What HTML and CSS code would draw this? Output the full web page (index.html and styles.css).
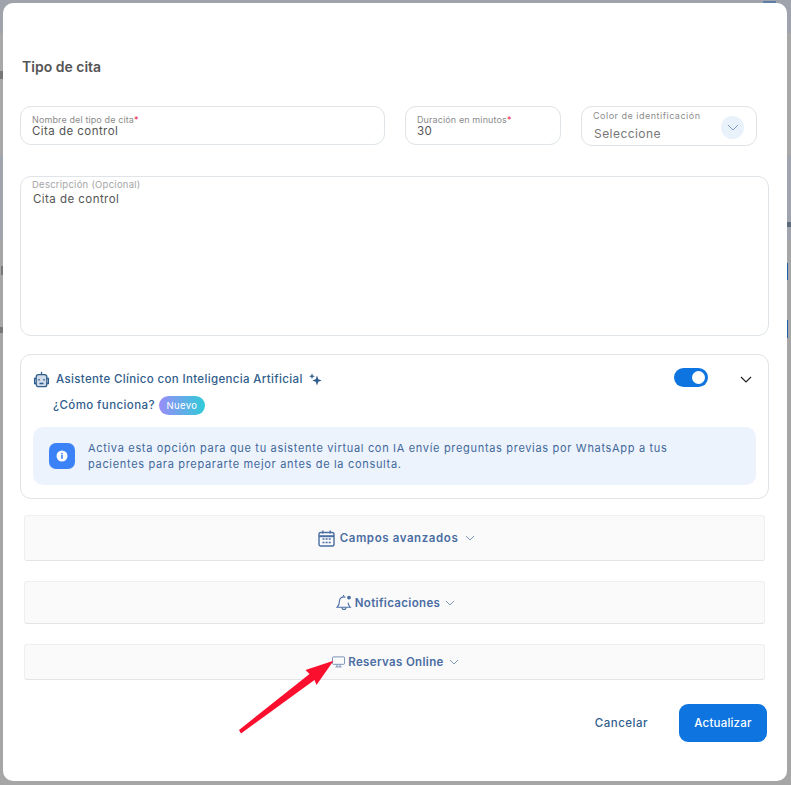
FILE: index.html

```html
<!DOCTYPE html>
<html lang="es">
<head>
    <meta charset="UTF-8">
    <meta name="viewport" content="width=device-width, initial-scale=1.0">
    <title>Tipo de cita</title>
    <link rel="stylesheet" href="styles.css">
</head>
<body>

    <!-- Bits of the page behind the modal -->
    <span class="behind behind-top"></span>
    <span class="behind behind-left-1"></span>
    <span class="behind behind-left-2"></span>
    <span class="behind behind-left-3"></span>
    <span class="behind behind-right-1"></span>
    <span class="behind behind-right-2"></span>
    <span class="behind behind-right-3"></span>

    <div class="modal">
        <h1 class="modal-title">Tipo de cita</h1>

        <!-- Top fields -->
        <div class="field-row">
            <div class="field field-name">
                <label>Nombre del tipo de cita<span class="required">*</span></label>
                <div class="value">Cita de control</div>
            </div>
            <div class="field field-minutes">
                <label>Duración en minutos<span class="required">*</span></label>
                <div class="value">30</div>
            </div>
            <div class="field field-color">
                <div>
                    <label>Color de identificación</label>
                    <div class="value">Seleccione</div>
                </div>
                <span class="select-arrow">
                    <svg width="12" height="7" viewBox="0 0 12 7" fill="none" stroke="#7f9cc0" stroke-width="1"><path d="M1 1l5 5 5-5"/></svg>
                </span>
            </div>
        </div>

        <div class="field-description">
            <label>Descripción (Opcional)</label>
            <div class="value">Cita de control</div>
        </div>

        <!-- AI assistant card -->
        <div class="ai-card">
            <div class="ai-header">
                <svg class="robot" width="17" height="17" viewBox="0 0 17 17" fill="none" stroke="#2f5d8c" stroke-width="1.3">
                    <path d="M8.5 .8v2.4"/>
                    <rect x="3.2" y="3.6" width="10.6" height="12" rx="2.2" fill="#cfdbe8"/>
                    <path d="M3.2 7.5H1.6v5h1.6M13.8 7.5h1.6v5h-1.6"/>
                    <path d="M6 8v1.6M11 8v1.6M6.5 12.5h4" stroke-width="1.4"/>
                </svg>
                <span class="ai-title">Asistente Clínico con Inteligencia Artificial</span>
                <svg class="sparkle" width="13" height="13" viewBox="0 0 13 13" fill="#2f5d8c">
                    <path d="M8 2.6l1.3 3.6 3.5 1.3-3.5 1.3L8 12.6 6.7 8.8 3.2 7.5l3.5-1.3z"/>
                    <path d="M3 .2l.8 2.2 2.2.8-2.2.8L3 6.2l-.8-2.2L0 3.2l2.2-.8z"/>
                </svg>
                <span class="toggle"><span class="toggle-knob"></span></span>
                <svg class="ai-chevron" width="12" height="7" viewBox="0 0 12 7" fill="none" stroke="#222" stroke-width="1.2"><path d="M1 1l5 5 5-5"/></svg>
            </div>
            <div class="ai-help">
                <span>¿Cómo funciona?</span>
                <span class="badge">Nuevo</span>
            </div>
            <div class="info-box">
                <span class="info-icon">
                    <svg width="12" height="12" viewBox="0 0 12 12"><circle cx="6" cy="6" r="5.5" fill="#fff"/><rect x="5.2" y="5" width="1.6" height="3.8" fill="#3b82f6"/><rect x="5.2" y="2.9" width="1.6" height="1.5" fill="#3b82f6"/></svg>
                </span>
                <p>Activa esta opción para que tu asistente virtual con IA envíe preguntas previas por WhatsApp a tus pacientes para prepararte mejor antes de la consulta.</p>
            </div>
        </div>

        <!-- Accordions -->
        <div class="accordion accordion-fields">
            <svg width="17" height="17" viewBox="0 0 17 17" fill="none" stroke="#4a6da3" stroke-width="1.4">
                <rect x="1" y="2.5" width="15" height="13.5" rx="1.8"/>
                <path d="M1 6.2h15" stroke-width="2"/>
                <path d="M4.8 .6v3M12.2 .6v3"/>
                <path d="M4.5 9h2M7.6 9h2M10.7 9h2M4.5 12.4h2M7.6 12.4h2M10.7 12.4h2" stroke-width="1.5"/>
            </svg>
            <span>Campos avanzados</span>
            <svg class="chev" width="10" height="6" viewBox="0 0 10 6" fill="none" stroke="#8299bd" stroke-width="1"><path d="M1 1l4 4 4-4"/></svg>
        </div>
        <div class="accordion accordion-notify">
            <svg width="16" height="17" viewBox="0 0 16 17" fill="none" stroke="#4a6da3" stroke-width="1.1">
                <path d="M9.5 3.2A4.4 4.4 0 0 0 3.4 7.2c0 3.5-.8 4.6-2.2 6h13c-1.3-1.3-1.9-2.3-2.1-4.6"/>
                <path d="M6 13.5a2 2 0 0 0 4 0"/>
                <path d="M7.6 1v1.4"/>
                <circle cx="13" cy="3.6" r="1.9" fill="#4a6da3" stroke="none"/>
            </svg>
            <span>Notificaciones</span>
            <svg class="chev" width="10" height="6" viewBox="0 0 10 6" fill="none" stroke="#8299bd" stroke-width="1"><path d="M1 1l4 4 4-4"/></svg>
        </div>
        <div class="accordion accordion-online">
            <svg width="13" height="12" viewBox="0 0 14 12" fill="none" stroke="#7189b3" stroke-width="1">
                <rect x=".5" y=".5" width="13" height="8" rx="1"/>
                <path d="M5.6 8.8l-.5 2.3M8.4 8.8l.5 2.3M3.8 11.3h6.4"/>
            </svg>
            <span>Reservas Online</span>
            <svg class="chev" width="10" height="6" viewBox="0 0 10 6" fill="none" stroke="#8299bd" stroke-width="1"><path d="M1 1l4 4 4-4"/></svg>
        </div>

        <div class="modal-actions">
            <button class="btn-cancel">Cancelar</button>
            <button class="btn-save">Actualizar</button>
        </div>
    </div>

    <!-- Annotation arrow on top of the screenshot -->
    <svg class="annotation" width="791" height="785" viewBox="0 0 791 785">
        <polygon fill="#fb0f2f" points="333.5,660.7 305.5,670 309.5,674 239,730 241,733.5 314.5,680 316.5,685"/>
    </svg>

</body>
</html>
```

FILE: styles.css

```css
* {
    box-sizing: border-box;
}
html, body {
    height: 100%;
}
body {
    margin: 0;
    padding: 3px 4px 4px 3px;
    overflow: hidden;
    background: linear-gradient(#9fa3ab 0 33px, #a8a8a8 33px 155px, #a0a4ac 155px 240px, #a6a6a6 240px);
    font-family: Inter, "Open Sans", sans-serif;
}
.behind {
    position: absolute;
}
.behind-top {
    top: 1px;
    left: 763px;
    width: 13px;
    height: 2px;
    background-color: #5f7fa5;
}
.behind-left-1 {
    top: 71px;
    left: 0;
    width: 3px;
    height: 8px;
    background-color: #777;
}
.behind-left-2 {
    top: 266px;
    left: 1px;
    width: 2px;
    height: 9px;
    background-color: #777;
}
.behind-left-3 {
    top: 327px;
    left: 0;
    width: 3px;
    height: 6px;
    background-color: #777;
}
.behind-right-1 {
    top: 222px;
    left: 787px;
    width: 4px;
    height: 5px;
    background-color: #5c6a7c;
}
.behind-right-2 {
    top: 263px;
    left: 787px;
    width: 1px;
    height: 17px;
    background-color: #1f5fb0;
}
.behind-right-3 {
    top: 320px;
    left: 787px;
    width: 1px;
    height: 18px;
    background-color: #1f5fb0;
}
.modal {
    position: relative;
    height: 778px;
    padding: 54px 18px 0 17px;
    background-color: #fff;
    border-radius: 10px;
}
.modal-title {
    margin: 0 0 29px 2px;
    font-size: 14px;
    line-height: 20px;
    font-weight: 600;
    color: #555;
}
label {
    display: block;
    font-size: 9px;
    line-height: 11px;
    letter-spacing: 0.12px;
    color: #8c8c8c;
}
.required {
    color: #e8173f;
}
.value {
    font-size: 11.5px;
    line-height: 13px;
    letter-spacing: 0.45px;
    color: #555;
}
.field-row {
    display: flex;
    align-items: flex-start;
    gap: 20px;
}
.field {
    height: 39px;
    padding: 7px 11px 0;
    border: 1px solid #dfe4e8;
    border-radius: 11px;
}
.field-name {
    width: 365px;
}
.field-minutes {
    width: 156px;
}
.field-color {
    display: flex;
    justify-content: space-between;
    width: 176px;
    height: 40px;
    padding: 3px 12px 0 11px;
}
.field-color label {
    letter-spacing: 0.5px;
}
.field-color .value {
    margin-top: 6px;
    margin-left: 1px;
    font-size: 12px;
    color: #777;
}
.select-arrow {
    display: flex;
    align-items: center;
    justify-content: center;
    width: 23px;
    height: 23px;
    margin-top: 6px;
    border-radius: 50%;
    background-color: #e9f1fb;
}
.field-description {
    width: 749px;
    height: 160px;
    margin-top: 30px;
    padding: 2px 11px;
    border: 1px solid #dfe4e8;
    border-radius: 11px;
}
.field-description label {
    color: #a5a5a5;
    font-size: 9.5px;
    letter-spacing: 0.25px;
}
.field-description .value {
    margin-top: 3px;
    margin-left: 1px;
}
.ai-card {
    width: 749px;
    height: 145px;
    margin-top: 18px;
    padding: 0 12px;
    border: 1px solid #dfe4e8;
    border-radius: 11px;
}
.ai-header {
    display: flex;
    align-items: center;
    height: 40px;
    padding-top: 8px;
    font-size: 11.5px;
    color: #2f5d8c;
}
.ai-title {
    margin-left: 6px;
    letter-spacing: 0.35px;
    font-weight: 500;
}
.sparkle {
    margin-left: 6px;
}
.toggle {
    display: flex;
    align-items: center;
    justify-content: flex-end;
    width: 34px;
    height: 19px;
    margin-left: auto;
    margin-top: -4px;
    margin-right: 1px;
    padding-right: 3px;
    border-radius: 10px;
    background-color: #0e74e0;
}
.toggle-knob {
    width: 13px;
    height: 13px;
    border-radius: 50%;
    background-color: #fff;
}
.ai-chevron {
    margin-left: 31px;
    margin-right: 4px;
}
.ai-help {
    display: flex;
    align-items: center;
    gap: 4px;
    height: 20px;
    margin-left: 20px;
    font-size: 11.5px;
    letter-spacing: 0.4px;
    font-weight: 500;
    color: #2f5d8c;
}
.badge {
    width: 46px;
    height: 19px;
    border-radius: 10px;
    background: linear-gradient(90deg, #9a8cf8, #2fcbd8);
    color: #fff;
    font-size: 9.5px;
    line-height: 19px;
    font-weight: 400;
    text-align: center;
}
.info-box {
    display: flex;
    align-items: center;
    gap: 13px;
    height: 58px;
    margin-top: 12px;
    padding: 0 16px;
    border-radius: 10px;
    background-color: #edf3fd;
}
.info-box p {
    width: 600px;
    margin: 0;
    font-size: 11px;
    line-height: 16px;
    letter-spacing: 0.68px;
    color: #41689a;
}
.info-icon {
    display: flex;
    align-items: center;
    justify-content: center;
    flex-shrink: 0;
    width: 26px;
    height: 26px;
    border-radius: 7px;
    background-color: #3b82f6;
}
.accordion {
    display: flex;
    align-items: center;
    justify-content: center;
    gap: 3px;
    width: 741px;
    margin-left: 4px;
    padding-left: 2px;
    border: 1px solid #eeeff1;
    border-bottom: 1px solid #e2e4e7;
    border-radius: 3px;
    background-color: #fafafa;
    font-size: 11.5px;
    font-weight: 600;
    letter-spacing: 0.35px;
    color: #4a6da3;
}
.accordion .chev {
    margin-left: 2px;
}
.accordion-fields {
    gap: 5px;
    height: 46px;
    margin-top: 16px;
    padding-left: 4px;
    letter-spacing: 0.6px;
}
.accordion-notify {
    height: 43px;
    margin-top: 20px;
}
.accordion-online {
    height: 36px;
    margin-top: 20px;
}
.modal-actions {
    display: flex;
    align-items: center;
    justify-content: flex-end;
    margin-top: 24px;
    margin-right: 2px;
}
.modal-actions button {
    border: none;
    font-family: inherit;
    font-size: 11.5px;
    font-weight: 500;
    letter-spacing: 0.2px;
}
.modal-actions .btn-cancel {
    margin-right: 31px;
    padding: 0;
    background: none;
    color: #2f5d8c;
    letter-spacing: 0.5px;
}
.btn-save {
    width: 88px;
    height: 38px;
    border-radius: 9px;
    background-color: #0e74e0;
    color: #fff;
}
.annotation {
    position: absolute;
    top: 0;
    left: 0;
    pointer-events: none;
}
```
